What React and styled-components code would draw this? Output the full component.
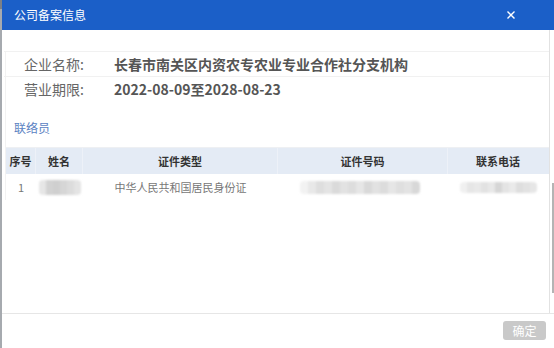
import styled, { createGlobalStyle } from 'styled-components'

const FONT = `"Noto Sans CJK SC", "Noto Sans", "Liberation Sans", sans-serif`

const GlobalStyle = createGlobalStyle`
  html, body {
    margin: 0;
    padding: 0;
    height: 348px;
    overflow: hidden;
    background: linear-gradient(to bottom, #7c8086 0 9px, #a6aaaf 9px);
    font-family: ${FONT};
  }
`

const Page = styled.div`
  height: 348px;
  padding-left: 2px;
  display: flex;
`

const Modal = styled.div`
  flex: 1;
  display: flex;
  flex-direction: column;
  background: #fff;
`

const Header = styled.div`
  height: 30px;
  flex-shrink: 0;
  background: #1b5fc8;
  display: flex;
  align-items: center;
  justify-content: space-between;
  padding: 0 39px 0 12px;
`

const Title = styled.span`
  color: #fff;
  font-size: 12px;
  line-height: 1;
`

const Close = styled.svg`
  width: 8px;
  height: 8px;
  display: block;
`

const Body = styled.div`
  height: 283px;
  display: flex;
`

const Content = styled.div`
  flex: 1;
  border-right: 1px solid #e2e2e2;
  padding: 21px 0 0 2px;
`

const Inner = styled.div`
  border-left: 1px solid #f2f2f2;
  margin-left: 1px;
`

const ScrollTrack = styled.div`
  width: 4px;
  display: flex;
  justify-content: flex-end;
`

const Thumb = styled.div`
  width: 2px;
  height: 110px;
  margin-top: 153px;
  background: #b4b4b4;
`

const InfoRow = styled.div`
  height: 24px;
  display: flex;
  align-items: center;
  border-top: 1px solid #f1f1f1;
  margin-left: -2px;
  padding-left: 20px;

  &:last-child {
    border-bottom: 1px solid #f1f1f1;
  }
`

const Label = styled.span`
  width: 90px;
  font-size: 14px;
  color: #666;
`

const Value = styled.span`
  font-size: 14px;
  font-weight: bold;
  color: #555;
`

const Section = styled.div`
  height: 40px;
  display: flex;
  align-items: center;
  padding: 6px 0 0 8px;
  font-size: 12px;
  color: #5b82c2;
  border-bottom: 1px solid #eef0f3;
`

const Grid = styled.div`
  display: grid;
  grid-template-columns: 30px 47px 195px 170px 1fr;
`

const HeadCell = styled.div`
  height: 26px;
  background: #e4ebf5;
  display: flex;
  align-items: center;
  justify-content: center;
  font-size: 11px;
  font-weight: bold;
  color: #333;
  border-right: 1px solid ${({ $sep }) => ($sep ? '#edf1f8' : 'transparent')};

  &:last-child {
    border-right: none;
  }
`

const Cell = styled.div`
  height: 26px;
  display: flex;
  align-items: center;
  justify-content: center;
  font-size: 11px;
  color: #777;
`

const Mosaic = styled.div`
  display: flex;
  height: ${({ $h }) => $h}px;
  margin-left: ${({ $shift }) => $shift || 0}px;
  filter: blur(1.2px);
  border-radius: 4px;
  overflow: hidden;
`

const Tile = styled.div`
  width: ${({ $w }) => $w}px;
  height: 100%;
`

const Footer = styled.div`
  flex: 1;
  border-top: 1px solid #e6e6e6;
  display: flex;
  justify-content: flex-end;
  align-items: flex-start;
  padding: 7px 8px 0 0;
`

const Button = styled.div`
  width: 43px;
  height: 19px;
  border-radius: 3px;
  background: #c9c9c9;
  color: #fff;
  font-size: 12px;
  display: flex;
  align-items: center;
  justify-content: center;
`

const blocks = (tones, w) =>
  tones.map((t, i) => <Tile key={i} $w={w} style={{ background: t }} />)

const nameTones = ['#e6e6e6', '#d2d2d2', '#cfcfcf', '#d6d6d6', '#dcdcdc', '#e4e4e4']
const idTones = [
  '#f2f2f2', '#e8e8e8', '#dedede', '#e4e4e4', '#dadada', '#e2e2e2', '#dddddd',
  '#e6e6e6', '#d9d9d9', '#e2e2e2', '#dcdcdc', '#e6e6e6', '#dfdfdf', '#e3e3e3', '#d8d8d8',
]
const phoneTones = [
  '#f0f0f0', '#e6e6e6', '#e9e9e9', '#e2e2e2', '#e8e8e8', '#d6d6d6', '#e4e4e4',
  '#eaeaea', '#dedede', '#e2e2e2', '#e6e6e6',
]

export default function App() {
  return (
    <>
      <GlobalStyle />
      <Page>
        <Modal>
          <Header>
            <Title>公司备案信息</Title>
            <Close viewBox="0 0 8 8">
              <path d="M0.5 0.5L7.5 7.5M7.5 0.5L0.5 7.5" stroke="#fff" strokeWidth="1.4" />
            </Close>
          </Header>
          <Body>
            <Content>
              <Inner>
                <InfoRow>
                  <Label>企业名称:</Label>
                  <Value>长春市南关区内资农专农业专业合作社分支机构</Value>
                </InfoRow>
                <InfoRow>
                  <Label>营业期限:</Label>
                  <Value>2022-08-09至2028-08-23</Value>
                </InfoRow>
                <Section>联络员</Section>
                <Grid>
                  <HeadCell $sep>序号</HeadCell>
                  <HeadCell $sep>姓名</HeadCell>
                  <HeadCell $sep>证件类型</HeadCell>
                  <HeadCell $sep>证件号码</HeadCell>
                  <HeadCell>联系电话</HeadCell>
                  <Cell>1</Cell>
                  <Cell>
                    <Mosaic $h={15}>{blocks(nameTones, 7)}</Mosaic>
                  </Cell>
                  <Cell>中华人民共和国居民身份证</Cell>
                  <Cell>
                    <Mosaic $h={13} $shift={-6}>{blocks(idTones, 8)}</Mosaic>
                  </Cell>
                  <Cell>
                    <Mosaic $h={11}>{blocks(phoneTones, 7)}</Mosaic>
                  </Cell>
                </Grid>
              </Inner>
            </Content>
            <ScrollTrack>
              <Thumb />
            </ScrollTrack>
          </Body>
          <Footer>
            <Button>确定</Button>
          </Footer>
        </Modal>
      </Page>
    </>
  )
}
